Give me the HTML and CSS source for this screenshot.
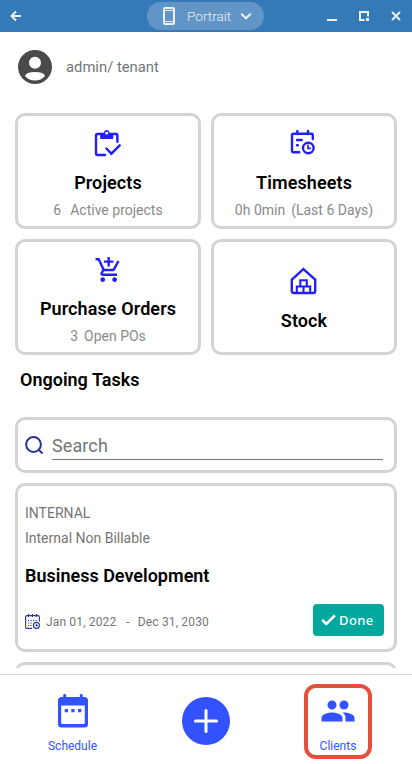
FILE: index.html
```
<!DOCTYPE html>
<html lang="en">

<head>
    <meta charset="UTF-8">
    <meta name="viewport" content="width=device-width, initial-scale=1.0">
    <title>Dashboard</title>
    <link rel="stylesheet" href="styles.css">
</head>

<body>
    <div class="titlebar">
        <svg class="back" width="12" height="12" viewBox="0 0 12 12"><path d="M11 6H2M6 1.5L1.5 6L6 10.5"/></svg>
        <div class="mode">
            <svg width="12" height="18" viewBox="0 0 12 18"><path d="M1 2Q1 1 2 1H10Q11 1 11 2V16Q11 17 10 17H2Q1 17 1 16Z"/><path class="line" d="M1 3.5H11M1 14.5H11"/></svg>
            <span>Portrait</span>
            <svg width="12" height="8" viewBox="0 0 12 8"><path class="chevron" d="M1.2 1.7L6 6.3L10.8 1.7"/></svg>
        </div>
        <div class="controls">
            <svg width="10" height="10" viewBox="0 0 10 10"><path d="M0 9H10"/></svg>
            <svg width="10" height="10" viewBox="0 0 10 10"><path d="M5.5 9H1V1H9V5.5"/><path class="fill" d="M7 7H10V10H7Z"/></svg>
            <svg width="10" height="10" viewBox="0 0 10 10"><path d="M1 1L9 9M9 1L1 9"/></svg>
        </div>
    </div>

    <div class="main">
        <div class="user">
            <svg width="34" height="34" viewBox="0 0 34 34">
                <circle cx="17" cy="17" r="17" fill="#4a4a4a"/>
                <circle cx="17" cy="12.7" r="6" fill="#fff"/>
                <path d="M7 26Q8 22 17 22Q26 22 27 26Q23 30.5 17 30.5Q11 30.5 7 26Z" fill="#fff"/>
            </svg>
            <span>admin/ tenant</span>
        </div>

        <div class="cards">
            <div class="card">
                <svg class="icon" width="28" height="28" viewBox="0.3 0 28 28">
                    <path d="M11.3 26H3.8Q2.3 26 2.3 24.5V6.5Q2.3 5 3.8 5H22.2Q23.7 5 23.7 6.5V12.7M12.7 19.5L17.7 24.7L26 16.3"/>
                    <path class="fill" d="M6.5 4H10.2Q10.6 .9 13 .9T15.8 4H19.5V10H6.5Z"/>
                    <circle class="hole" cx="13" cy="4.2" r="1.4"/>
                </svg>
                <h2>Projects</h2>
                <p><span>6</span><span class="lbl">Active projects</span></p>
            </div>
            <div class="card">
                <svg class="icon" width="28" height="28" viewBox="0 0 28 28">
                    <path d="M9.3 23.3H3.5Q2 23.3 2 21.8V6.2Q2 4.7 3.5 4.7H21.3Q22.8 4.7 22.8 6.2V10M7.3 2V5M18 2V5M7 11H11.7M7 16.2H7.8"/>
                    <circle cx="18.3" cy="19" r="5.3"/>
                    <path class="thin" d="M18 16.3V19.4H20.3"/>
                </svg>
                <h2>Timesheets</h2>
                <p><span>0h 0min</span><span class="near">(Last 6 Days)</span></p>
            </div>
            <div class="card">
                <svg class="icon" width="28" height="28" viewBox="-0.3 -0.6 23.5 23.5">
                    <path class="fill" d="M11 9h2V6h3V4h-3V1h-2v3H8v2h3v3zm-4 9c-1.1 0-1.99.9-1.99 2S5.9 22 7 22s2-.9 2-2-.9-2-2-2zm10 0c-1.1 0-1.99.9-1.99 2s.89 2 1.99 2 2-.9 2-2-.9-2-2-2zm-9.83-3.25l.03-.12.9-1.63h7.45c.75 0 1.41-.41 1.75-1.03l3.86-7.01L19.42 4h-.01l-1.1 2-2.76 5H8.53l-.13-.27L6.16 6l-.95-2-.94-2H1v2h2l3.6 7.59-1.35 2.45c-.16.28-.25.61-.25.96 0 1.1.9 2 2 2h12v-2H7.42c-.13 0-.25-.11-.25-.25z"/>
                </svg>
                <h2>Purchase Orders</h2>
                <p><span>3</span><span class="near">Open POs</span></p>
            </div>
            <div class="card stock">
                <svg class="icon" width="28" height="28" viewBox="0 0 28 28">
                    <path d="M1.8 12.6L13.4 2L25.2 12.6V24Q25.2 26 23.2 26H3.8Q1.8 26 1.8 24Z"/>
                    <path class="box" d="M10.3 19.5V13.3H16.8V19.5M6.8 26V19.5H20.2V26M13.5 19.5V26"/>
                </svg>
                <h2>Stock</h2>
            </div>
        </div>

        <h2 class="heading">Ongoing Tasks</h2>

        <div class="search">
            <svg width="19" height="19" viewBox="0 0 19 19"><circle cx="8.5" cy="8.5" r="7.4"/><path d="M13.7 13.7L17.6 17.6"/></svg>
            <div class="field">Search</div>
        </div>

        <div class="task">
            <p>INTERNAL</p>
            <p>Internal Non Billable</p>
            <h2>Business Development</h2>
            <div class="foot">
                <svg width="15" height="15" viewBox="0 0 15 15">
                    <path d="M7 14.4H2Q.6 14.4.6 13V3Q.6 1.6 2 1.6H13Q14.4 1.6 14.4 3V7.5M3.5 0V3M7.5 0V3M11.5 0V3"/>
                    <path class="dots" d="M3 6.5H13M3 9H8M3 11.5H7"/>
                    <circle cx="11.4" cy="11.4" r="3"/>
                    <path d="M11.3 9.8V11.6H12.8"/>
                </svg>
                <span>Jan 01, 2022</span>
                <span class="dash">-</span>
                <span>Dec 31, 2030</span>
                <div class="done">
                    <svg width="15" height="12" viewBox="0 0 15 12"><path d="M1.2 5.8L5.3 10L13.8 1.5"/></svg>
                    <span>Done</span>
                </div>
            </div>
        </div>
        <div class="task"></div>
    </div>

    <div class="nav">
        <div class="item">
            <svg width="32" height="36" viewBox="0 0 32 36">
                <path fill-rule="evenodd" d="M6.2 2.2Q6.2 1 7.7 1T9.2 2.2V4H22.8V2.2Q22.8 1 24.3 1T25.8 2.2V4H27.5Q31 4 31 7.5V31Q31 34.5 27.5 34.5H4.5Q1 34.5 1 31V7.5Q1 4 4.5 4H6.2ZM4.2 12.5V29.5Q4.2 31 5.7 31H26.3Q27.8 31 27.8 29.5V12.5Z"/>
                <path d="M7.7 16H11V19.2H7.7ZM14.3 16H17.6V19.2H14.3ZM21 16H24.3V19.2H21Z"/>
            </svg>
            <span>Schedule</span>
        </div>
        <div class="add">
            <svg width="24" height="24" viewBox="0 0 24 24"><path d="M12 1.5V22.5M1.5 12H22.5"/></svg>
        </div>
        <div class="item active">
            <svg width="36" height="36" viewBox="0 0 24 24">
                <path d="M16 11c1.66 0 2.99-1.34 2.99-3S17.66 5 16 5c-1.66 0-3 1.34-3 3s1.34 3 3 3zm-8 0c1.66 0 2.99-1.34 2.99-3S9.66 5 8 5C6.34 5 5 6.34 5 8s1.34 3 3 3zm0 2c-2.33 0-7 1.17-7 3.5V19h14v-2.5c0-2.33-4.67-3.5-7-3.5zm8 0c-.29 0-.62.02-.97.05 1.16.84 1.97 1.97 1.97 3.45V19h6v-2.5c0-2.33-4.67-3.5-7-3.5z"/>
            </svg>
            <span>Clients</span>
        </div>
    </div>
</body>

</html>
```
FILE: styles.css
```
* {
    margin: 0;
    padding: 0;
    box-sizing: border-box;
}

body {
    height: 764px;
    overflow: hidden;
    background-color: #fff;
    font-family: Roboto, "Liberation Sans", sans-serif;
    color: #757575;
}

svg {
    display: block;
    flex-shrink: 0;
}

h2 {
    font-size: 18px;
    line-height: 24px;
    font-weight: 600;
    color: #000;
}

.titlebar {
    display: grid;
    grid-template-columns: 137px 117px 1fr;
    align-items: center;
    height: 32px;
    padding: 0 11px 0 10px;
    background-color: #347ab7;
}

.titlebar svg {
    fill: none;
    stroke: #eee;
    stroke-width: 2;
}

.titlebar .line {
    stroke-width: 1;
}

.titlebar .fill {
    fill: #eee;
    stroke: none;
}

.mode {
    display: flex;
    align-items: center;
    height: 28px;
    padding-left: 16px;
    border-radius: 14px;
    background-color: #6095c6;
    font-size: 13.6px;
    font-weight: 300;
    color: #eee;
}

.mode span {
    width: 44px;
    margin: -1px 9px 0 12px;
    white-space: nowrap;
}

.controls {
    display: flex;
    justify-content: flex-end;
    gap: 22px;
}

.main {
    height: 636px;
    padding: 18px 15px 0;
    overflow: hidden;
}

.user {
    display: flex;
    align-items: center;
    gap: 14px;
    height: 34px;
    margin-left: 3px;
    font-size: 14.8px;
}

.cards {
    display: grid;
    grid-template-columns: 1fr 1fr;
    gap: 10px;
    margin-top: 29px;
}

.card {
    display: flex;
    flex-direction: column;
    align-items: center;
    height: 116px;
    padding-top: 13px;
    border: 3px solid #d3d3d3;
    border-radius: 10px;
}

.card.stock {
    padding-top: 25px;
}

.card h2 {
    letter-spacing: 0.1px;
}

.icon {
    margin-bottom: 14px;
    fill: none;
    stroke: #231ffb;
    stroke-width: 2.4;
    stroke-linecap: round;
}

.icon .fill {
    fill: #231ffb;
    stroke: none;
}

.icon .hole {
    fill: #fff;
    stroke: none;
}

.icon .thin {
    stroke-width: 1.7;
}

.icon .box {
    stroke-width: 2.1;
}

.card p {
    margin-top: 5px;
    font-size: 14px;
    line-height: 20px;
    color: #8a8a8a;
}

.card .lbl {
    margin-left: 9px;
}

.card .near {
    margin-left: 6px;
}

.heading {
    margin: 13px 0 25px 5px;
}

.search {
    display: flex;
    align-items: center;
    gap: 8px;
    height: 56px;
    padding: 0 11px 0 7px;
    border: 3px solid #d3d3d3;
    border-radius: 10px;
}

.search svg {
    fill: none;
    stroke: #283593;
    stroke-width: 2;
}

.field {
    flex: 1;
    height: 27px;
    margin-top: 2px;
    border-bottom: 1px solid #777;
    font-size: 18px;
    line-height: 25px;
    letter-spacing: 0.1px;
}

.task {
    height: 169px;
    margin-top: 10px;
    padding: 15px 10px 0 7px;
    border: 3px solid #d3d3d3;
    border-radius: 10px;
}

.task p {
    font-size: 14px;
    line-height: 25px;
}

.task h2 {
    margin-top: 13px;
}

.foot {
    display: flex;
    align-items: center;
    height: 32px;
    margin-top: 16px;
    font-size: 12px;
}

.foot > svg {
    margin: 3px 6px 0 0;
    fill: none;
    stroke: #283593;
    stroke-width: 1.1;
}

.foot > span {
    margin-top: 4px;
    letter-spacing: 0.15px;
}

.foot .dots {
    stroke-dasharray: 1.2 1.3;
}

.foot .dash {
    margin-right: 8px;
    margin-left: 10px;
}

.done {
    display: flex;
    align-items: center;
    gap: 3px;
    width: 71px;
    height: 32px;
    margin-left: auto;
    padding-left: 8px;
    border-radius: 4px;
    background-color: #00a89d;
    font-family: "Noto Sans", sans-serif;
    font-size: 13px;
    font-weight: 500;
    letter-spacing: 0.4px;
    line-height: 30px;
    color: #fff;
}

.done span {
    margin-top: -1px;
}

.done svg {
    margin-top: -1px;
    fill: none;
    stroke: #fff;
    stroke-width: 2.6;
}

.nav {
    display: grid;
    grid-template-columns: repeat(3, 1fr);
    justify-items: center;
    height: 90px;
    margin-top: 6px;
    padding: 9px 7px 0 6px;
    border-top: 1px solid #d0d0d0;
}

.item {
    display: flex;
    flex-direction: column;
    align-items: center;
    width: 68px;
    height: 75px;
    padding-top: 9px;
    font-size: 12px;
    line-height: 16px;
    color: #3355f5;
}

.item svg {
    margin-bottom: 9px;
    fill: #3352ff;
}

.item.active {
    margin-right: 1px;
    padding-top: 5px;
    border: 4px solid #e5503c;
    border-radius: 12px;
}

.add {
    display: flex;
    align-items: center;
    justify-content: center;
    width: 48px;
    height: 48px;
    margin: 13px 0 0 1px;
    border-radius: 50%;
    background-color: #3352ff;
}

.add svg {
    stroke: #fff;
    stroke-width: 3;
    stroke-linecap: round;
}
```
